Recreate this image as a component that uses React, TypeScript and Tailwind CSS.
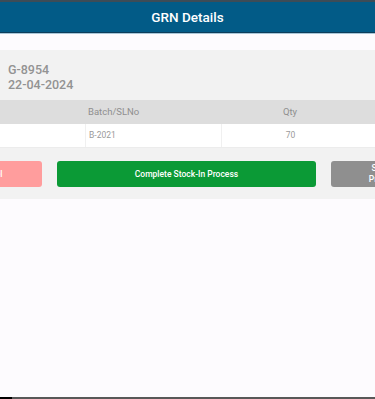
const columns = [
  { key: 'item', title: 'Item', width: 'w-[136px]', center: false },
  { key: 'batch', title: 'Batch/SLNo', width: 'w-[136px]', center: false },
  { key: 'qty', title: 'Qty', width: 'w-[138px]', center: true },
];

const rows = [{ item: 'Cement', batch: 'B-2021', qty: '70' }];

const App = () => {
  return (
    <div className="w-[375px] h-[399px] overflow-hidden flex flex-col bg-[#fdfbfe] font-['Roboto',sans-serif]">
      <div className="h-[2px] bg-[#3d4c57]" />
      <header className="h-[31px] bg-[#025b87] border-b border-[#0d3e5b] flex items-center justify-center">
        <h1 className="text-[13.5px] font-medium text-white">GRN Details</h1>
      </header>
      <div className="h-[1px] bg-[#a9c7d8]" />

      <div className="h-[16px]" />

      <section className="bg-[#f2f2f2] pl-2 pt-[12px] pb-[8px] text-[12.5px] leading-[15px] font-medium text-[#939393]">
        <div>G-8954</div>
        <div>22-04-2024</div>
      </section>

      <div className="overflow-hidden bg-[#f2f2f2]">
        <div className="flex ml-[-51px] h-[24px] bg-[#dddddd] text-[9.5px] text-[#8f8f8f]">
          {columns.map(col => (
            <div key={col.key} className={`${col.width} shrink-0 flex items-center ${col.center ? 'justify-center' : 'pl-[3px]'}`}>
              {col.title}
            </div>
          ))}
        </div>
        {rows.map((row, i) => (
          <div key={i} className="flex ml-[-51px] h-[24px] bg-white border-b border-[#ececec] text-[8.5px] text-[#9a9a9a]">
            {columns.map((col, j) => (
              <div
                key={col.key}
                className={`${col.width} shrink-0 flex items-center ${j > 0 ? 'border-l border-[#f0f0f0]' : ''} ${col.center ? 'justify-center' : 'pl-[3px]'}`}
              >
                {row[col.key as keyof typeof row]}
              </div>
            ))}
          </div>
        ))}

        <div className="flex justify-center gap-[15px] pt-[13px] pb-[12px]">
          <button className="w-[105px] h-[26px] shrink-0 rounded-[3px] bg-[#ff9d9d] text-white text-[8.5px] font-medium">
            Cancel
          </button>
          <button className="w-[259px] h-[26px] shrink-0 rounded-[3px] bg-[#0b9a36] text-white text-[8.5px] font-medium">
            Complete Stock-In Process
          </button>
          <button className="w-[107px] h-[26px] shrink-0 rounded-[3px] bg-[#8f8f8f] text-white text-[8.5px] font-medium leading-[11px]">
            Save &amp;<br />Proceed
          </button>
        </div>
      </div>

      <div className="flex-1" />
      <div className="h-[2px] flex">
        <div className="w-[12px] bg-black" />
        <div className="flex-1 bg-[#585858]" />
      </div>
    </div>
  );
};

export default App;
